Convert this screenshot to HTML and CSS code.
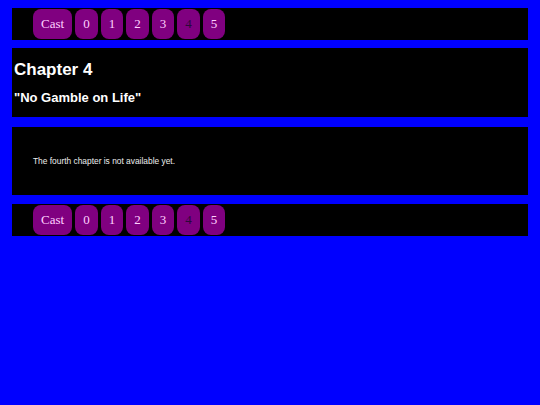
FILE: index.html
```html
<!DOCTYPE html>
<html>
<head>
<meta charset="utf-8">
<link rel="stylesheet" href="styles.css">
</head>
<body>
<div class="page">
  <nav class="chapters">
    <a class="btn">Cast</a>
    <a class="btn">0</a>
    <a class="btn">1</a>
    <a class="btn">2</a>
    <a class="btn">3</a>
    <a class="btn current">4</a>
    <a class="btn">5</a>
  </nav>
  <header class="title">
    <h1>Chapter 4</h1>
    <h2>"No Gamble on Life"</h2>
  </header>
  <section class="content">
    <p>The fourth chapter is not available yet.</p>
  </section>
  <nav class="chapters">
    <a class="btn">Cast</a>
    <a class="btn">0</a>
    <a class="btn">1</a>
    <a class="btn">2</a>
    <a class="btn">3</a>
    <a class="btn current">4</a>
    <a class="btn">5</a>
  </nav>
</div>
</body>
</html>
```
FILE: styles.css
```css
html, body {
  margin: 0;
  padding: 0;
  background: #0000ff;
}
body {
  padding: 8px 12px;
  font-family: "Liberation Sans", Arial, sans-serif;
  color: #fff;
}
.page {
  display: flex;
  flex-direction: column;
}
.chapters {
  background: #000;
  display: flex;
  gap: 3px;
  padding: 1px 0 1px 21px;
  height: 30px;
}
.btn {
  display: flex;
  align-items: center;
  justify-content: center;
  height: 30px;
  padding: 0 8px;
  background: #800080;
  border-radius: 8px;
  font-family: "Liberation Serif", "Times New Roman", serif;
  font-size: 13px;
  color: #ffd0ff;
}
.btn.current {
  color: #2a0a3a;
}
.title {
  background: #000;
  margin-top: 8px;
  padding: 12px 2px;
}
.title h1 {
  margin: 0 0 10px;
  font-size: 17px;
  line-height: 20px;
  font-weight: bold;
}
.title h2 {
  margin: 0;
  font-size: 13px;
  line-height: 15px;
  font-weight: bold;
}
.content {
  background: #000;
  margin-top: 10px;
  padding: 29px 21px;
}
.content p {
  margin: 0;
  font-size: 8.4px;
  line-height: 10px;
  color: #eee;
}
.content + .chapters {
  margin-top: 9px;
}
```
